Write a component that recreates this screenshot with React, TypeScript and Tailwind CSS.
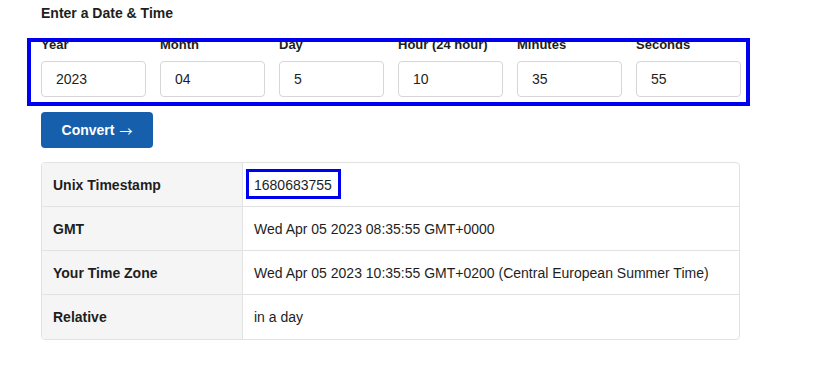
import type { ReactNode } from 'react';

const FIELDS = [
  { label: 'Year', value: '2023' },
  { label: 'Month', value: '04' },
  { label: 'Day', value: '5' },
  { label: 'Hour (24 hour)', value: '10' },
  { label: 'Minutes', value: '35' },
  { label: 'Seconds', value: '55' },
];

const ROWS = [
  { label: 'GMT', value: 'Wed Apr 05 2023 08:35:55 GMT+0000' },
  { label: 'Your Time Zone', value: 'Wed Apr 05 2023 10:35:55 GMT+0200 (Central European Summer Time)' },
  { label: 'Relative', value: 'in a day' },
];

function Row({ label, children, last }: { label: string; children: ReactNode; last?: boolean }): ReactNode {
  return (
    <div className={`flex h-[44px] ${last ? '' : 'border-b border-[#e2e2e2]'}`}>
      <div className="flex w-[201px] items-center border-r border-[#e2e2e2] bg-[#f5f5f5] pl-[11px] pt-px font-bold">
        {label}
      </div>
      <div className="relative flex flex-1 items-center pl-[11px] pt-px">{children}</div>
    </div>
  );
}

export default function App(): ReactNode {
  return (
    <div className="min-h-[366px] bg-white pl-[41px] pt-[3px] text-[14px] text-[#1e1e1e] font-['Liberation_Sans',Arial,sans-serif]">
      <h2 className="h-5 leading-5 font-bold">Enter a Date &amp; Time</h2>

      <div className="relative mt-[14px] flex gap-[14px]">
        {FIELDS.map((field) => (
          <label key={field.label} className="flex w-[105px] flex-col">
            <span className="text-[13px] leading-4 font-bold">{field.label}</span>
            <input
              readOnly
              value={field.value}
              className="mt-2 h-9 w-full rounded-[4px] border border-[#d6d6d6] bg-white px-[14px] text-[14px] text-[#1e1e1e] outline-none"
            />
          </label>
        ))}
        <div className="pointer-events-none absolute left-[-14px] top-[1px] h-[68px] w-[723px] border-4 border-[#0000f0]" />
      </div>

      <button
        type="button"
        className="mt-[15px] flex h-9 w-[112px] items-center justify-center gap-[5px] rounded-[4px] bg-[#155fad] text-[14px] font-bold text-white"
      >
        <span>Convert</span>
        <span className="font-['Noto_Sans_CJK_SC',sans-serif] text-[13px] font-normal leading-none">→</span>
      </button>

      <div className="mt-[14px] w-[699px] overflow-hidden rounded-[4px] border border-[#e2e2e2]">
        <Row label="Unix Timestamp">
          <span>1680683755</span>
          <div className="pointer-events-none absolute left-[3px] top-[6px] h-[30px] w-[95px] border-[3px] border-[#0000f0]" />
        </Row>
        {ROWS.map((row, i) => (
          <Row key={row.label} label={row.label} last={i === ROWS.length - 1}>
            {row.value}
          </Row>
        ))}
      </div>
    </div>
  );
}
